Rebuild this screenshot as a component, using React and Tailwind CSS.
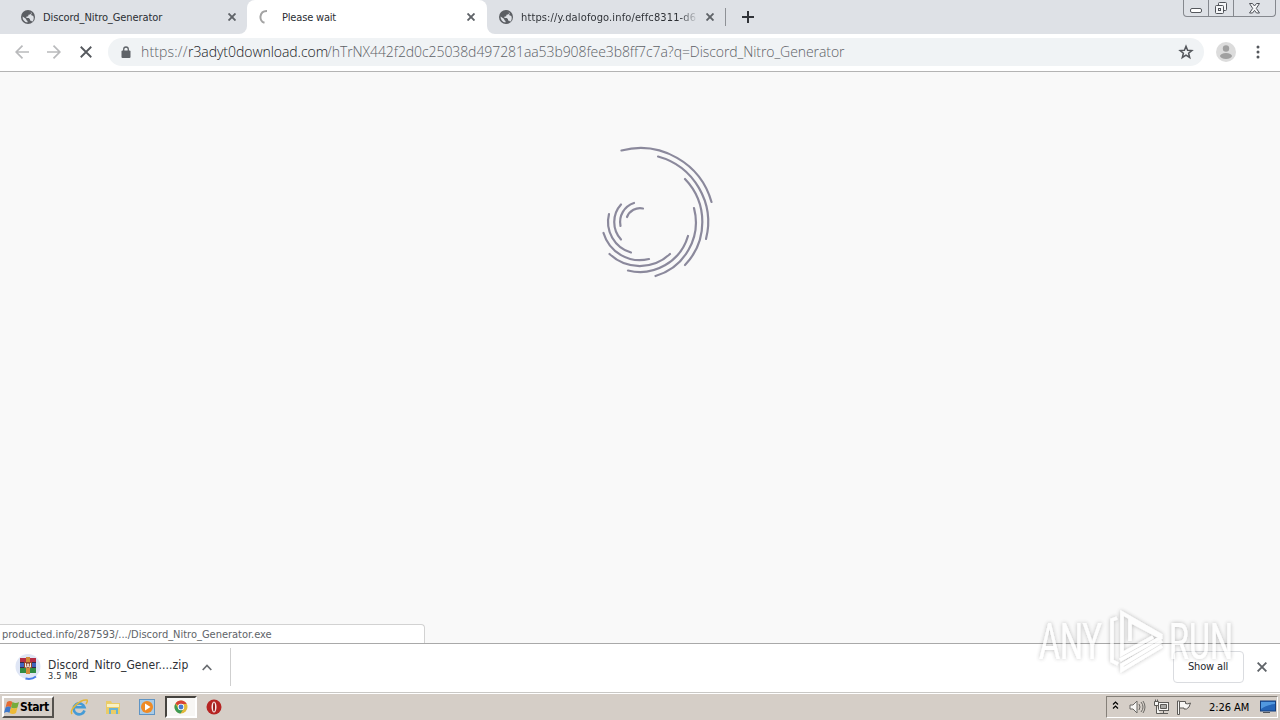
import { useId } from 'react';

const URL_PATH = '/hTrNX442f2d0c25038d497281aa53b908fee3b8ff7c7a?q=Discord_Nitro_Generator';

// Arcs of the loading spiral, from the outside in
const SPIRAL = [
  'M621.500 150.500A74 74 0 0 1 711.500 202',
  'M658 156.500A68 68 0 0 1 706 239',
  'M685 179A62 62 0 0 1 685 265',
  'M694 208A56 56 0 0 1 655.500 276',
  'M688 236A50 50 0 0 1 628 270.500',
  'M670 254A44 44 0 0 1 609.500 254',
  'M649 259A38 38 0 0 1 603.500 233',
  'M631 252.500A32 32 0 0 1 609 214',
  'M621 239.500A26 26 0 0 1 621 204.500',
  'M620.500 226A20 20 0 0 1 634 203',
  'M627 217A14 14 0 0 1 643 208.500',
];

const CloseIcon = ({ size = 8, width = 1.9, color = '#5f6368' }) => (
  <svg width={size} height={size} viewBox="0 0 8 8" className="shrink-0" fill="none" stroke={color} strokeWidth={width}>
    <path d="M.5 .5l7 7M7.500 .5l-7 7" />
  </svg>
);

const GlobeIcon = () => (
  <svg width="14" height="14" viewBox="0 0 14 14" className="shrink-0">
    <circle cx="7" cy="7" r="7" fill="#5b5e63" />
    <path d="M8 1.500l3 1.200-2 1.800-1.500.3-.3 1.500-2 .4.3 1.300h2.300l1.200 1.300v1.200l1.200.3 1 1A5.500 5.500 0 0 0 12.300 6L10 5l1-2zM1.600 6.500l3.600 2.400v1l1.300 1v1.700A5.600 5.600 0 0 1 1.600 6.500z" fill="#dee1e6" />
  </svg>
);

const WindowButtons = () => (
  <div className="flex h-[17px] w-[93px] rounded-b-[4px] border border-t-0 border-[#85888e]">
    <div className="flex w-[25px] items-center justify-center border-r border-[#85888e] pt-[5px]">
      <div className="h-[5px] w-3 rounded-[2px] border border-[#55585d] bg-white" />
    </div>
    <div className="flex w-[25px] items-center justify-center border-r border-[#85888e]">
      <svg width="14" height="14" viewBox="0 0 14 14" fill="#f5f6f8" stroke="#505359">
        <rect x="4.500" y="1.500" width="8" height="8" rx="1" />
        <rect x="1.500" y="4.500" width="8" height="8" rx="1" />
        <rect x="4.500" y="7.500" width="2" height="2" />
      </svg>
    </div>
    <div className="flex flex-1 items-center justify-center">
      <svg width="13" height="11" viewBox="0 0 13 11" fill="#f5f6f8" stroke="#505359">
        <path d="M1.500 .5h3l2 2.500 2-2.500h3L8.300 5.400l3.200 4.600h-3l-2-2.600-2 2.600h-3l3.200-4.600z" />
      </svg>
    </div>
  </div>
);

const TabStrip = () => (
  <div className="flex h-[34px] bg-white">
    <div className="flex h-full w-[247px] items-center rounded-br-lg bg-[#dee1e6] pl-[21px]">
      <GlobeIcon />
      <span className="ml-2 w-[185px] pt-[2px] text-[11px] tracking-[-0.090px]">Discord_Nitro_Generator</span>
      <CloseIcon />
    </div>
    <div className="h-full w-[240px] bg-[#dee1e6] [clip-path:inset(0)]">
      <div className="flex h-full items-center rounded-t-lg bg-white pl-3">
        <svg width="14" height="14" viewBox="0 0 14 14" className="shrink-0" fill="none" stroke="#a3a3a3" strokeWidth="2">
          <path d="M8 1C.1.900-.5 11 5.500 12.800" />
        </svg>
        <span className="ml-[9px] w-[185px] pt-[2px] text-[11px] tracking-[-0.180px]">Please wait</span>
        <CloseIcon />
      </div>
    </div>
    <div className="flex h-full flex-1 rounded-bl-lg bg-[#dee1e6]">
      <div className="flex h-full w-[238px] items-center pl-3">
        <GlobeIcon />
        <span className="ml-2 mr-2 w-[177px] overflow-hidden whitespace-nowrap bg-linear-to-r from-[#2b2e33] from-90% to-transparent bg-clip-text pt-[2px] text-[11px] tracking-[0.130px] text-transparent">
          https://y.dalofogo.info/effc8311-d6
        </span>
        <CloseIcon />
      </div>
      <div className="mt-[8px] h-[18px] w-px bg-[#8e9196]" />
      <svg width="12" height="12" viewBox="0 0 12 12" className="ml-4 mt-[11px]" stroke="#303338" strokeWidth="2">
        <path d="M6 0v12M0 6h12" />
      </svg>
      <div className="ml-auto mr-1">
        <WindowButtons />
      </div>
    </div>
  </div>
);

const Toolbar = () => (
  <div className="flex h-[38px] items-center border-b border-[#b4b4b4] bg-white pb-px pl-[15px]">
    <svg width="14" height="14" viewBox="0 0 14 14" fill="none" stroke="#b9babc" strokeWidth="1.700">
      <path d="M14 7H1M7.500 .7L1.200 7l6.300 6.300" />
    </svg>
    <svg width="14" height="14" viewBox="0 0 14 14" className="ml-[18px]" fill="none" stroke="#b9babc" strokeWidth="1.700">
      <path d="M0 7h13M6.500 .7L12.800 7l-6.300 6.300" />
    </svg>
    <div className="ml-[19px]">
      <CloseIcon size={12} width={1.2} color="#55585d" />
    </div>
    <div className="ml-[16px] flex h-7 w-[1096px] items-center rounded-full bg-[#f0f3f5] pl-[13px] pr-[10px]">
      <svg width="10" height="13" viewBox="0 0 10 13" className="shrink-0">
        <rect x=".5" y="4.500" width="9" height="7.500" rx="1" fill="#5f6368" />
        <path d="M2.700 5V3.300a2.300 2.300 0 0 1 4.600 0V5" fill="none" stroke="#5f6368" strokeWidth="1.300" />
      </svg>
      <span className="ml-[10px] whitespace-nowrap pb-[2px] font-['Open_Sans','Noto_Sans',sans-serif] text-[14px] font-light text-[#5d6166]">
        <span className="inline-block w-[47px] tracking-[0.150px]">https://</span>
        <span className="inline-block w-[139px] tracking-[-0.050px] text-[#17191c]">r3adyt0download.com</span>
        <span className="inline-block tracking-[-0.075px]">{URL_PATH}</span>
      </span>
      <svg width="16" height="16" viewBox="0 0 16 16" className="ml-auto shrink-0" fill="none" stroke="#54575c" strokeWidth="1.500">
        <path d="M8 2.200l1.600 4 4.300.3-3.300 2.800 1.100 4.200L8 11.200l-3.700 2.300 1.100-4.200-3.300-2.800 4.300-.3z" />
      </svg>
    </div>
    <svg width="20" height="20" viewBox="0 0 20 20" className="ml-3">
      <circle cx="10" cy="10" r="10" fill="#dcdcdc" />
      <circle cx="10" cy="6.500" r="3.200" fill="#a0a0a0" />
      <ellipse cx="10" cy="14" rx="6" ry="2.900" fill="#a0a0a0" />
    </svg>
    <svg width="4" height="14" viewBox="0 0 4 14" className="ml-[20px]" fill="#54575c">
      <circle cx="2" cy="2" r="1.500" />
      <circle cx="2" cy="7" r="1.500" />
      <circle cx="2" cy="12" r="1.500" />
    </svg>
  </div>
);

const PageContent = () => (
  <div className="flex h-[571px] flex-col bg-[#f9f9f9]">
    <svg width="120" height="140" viewBox="598 142 120 140" className="ml-[598px] mt-[70px]" fill="none" stroke="#8b899c" strokeWidth="2.200" strokeLinecap="round">
      {SPIRAL.map((d) => <path key={d} d={d} />)}
    </svg>
    {/* Link status */}
    <div className="mt-auto flex h-[19px] w-[425px] items-center rounded-tr-[4px] border-r border-t border-[#d2d2d2] bg-white pl-[2px] pt-[2px] text-[11px] text-[#606368]">
      <span className="tracking-[-0.010px]">producted.info/287593/.../Discord_Nitro_Generator.exe</span>
    </div>
  </div>
);

const ArchiveIcon = () => (
  <svg width="26" height="28" viewBox="0 0 26 28">
    <circle cx="13" cy="13.500" r="12.500" fill="#dfe6f5" />
    <path d="M10.500 25.500q6 1.500 10.500-2" fill="none" stroke="#4a7ee8" strokeWidth="2" />
    <path d="M5 5h16v5H5z" fill="#b52c43" />
    <path d="M5 10h16v5H5z" fill="#4163bd" />
    <path d="M5 15h16v5H5z" fill="#318d43" />
    <path d="M5 9.500h16M5 14.500h16" stroke="#35294a" />
    <path d="M11 4h4v17h-4z" fill="#d38b38" />
    <path d="M9 9h8v6H9z" fill="#94452b" />
    <path d="M10.500 10v4h1.800v-3h1.400v3h1.800v-4" fill="none" stroke="#f5eee0" />
  </svg>
);

const DownloadShelf = () => (
  <div className="flex h-[50px] items-center border-b border-t border-b-[#c9c8c5] border-t-[#a9a9a9] bg-white pb-[2px]">
    <div className="flex h-[38px] w-[231px] items-center border-r border-[#cfcfcf] pl-[15px]">
      <ArchiveIcon />
      <div className="ml-[7px] w-[142px] whitespace-nowrap pt-[5px] text-[#2e3135]">
        <div className="text-[12px] leading-[13px] tracking-[0.070px]">Discord_Nitro_Gener....zip</div>
        <div className="text-[9px] leading-[9px] tracking-[0.300px]">3.5 MB</div>
      </div>
      <svg width="10" height="7" viewBox="0 0 10 7" className="ml-3" fill="none" stroke="#6a6d71" strokeWidth="1.700">
        <path d="M.7 6L5 1.500 9.300 6" />
      </svg>
    </div>
    <button className="ml-auto h-8 w-[71px] rounded-[4px] border border-[#dadce0] bg-white pr-px pt-px text-[11px] tracking-[-0.150px] text-[#24272b]">Show all</button>
    <div className="ml-[13px] mr-[13px]">
      <CloseIcon size={10} width={1.5} />
    </div>
  </div>
);

// Translucent logo floating above the page and the download shelf
const Watermark = () => {
  const id = useId();
  return (
    <svg width="210" height="76" viewBox="0 0 210 76" className="pointer-events-none absolute left-[1034px] top-[604px]">
      <filter id={id} x="-10%" y="-10%" width="120%" height="120%">
        <feDropShadow dx="0" dy="0" stdDeviation="2" floodColor="#000" floodOpacity=".36" />
      </filter>
      <g filter={`url(#${id})`} opacity=".75" fill="#fff" fontFamily="'Roboto', sans-serif" fontSize="50">
        <text x="5" y="55" textLength="63" lengthAdjust="spacingAndGlyphs">ANY</text>
        <text x="135" y="55" textLength="64" lengthAdjust="spacingAndGlyphs">RUN</text>
        <g fill="none" stroke="#fff" strokeWidth="3.500">
          <path d="M83 14l-5 2v41l6 3" />
          <path d="M128 32L88 9v41l31-17M128 34L96 17v20" />
          <path d="M128 33L86 56M128 37L88 61v5l40-24" />
        </g>
      </g>
    </svg>
  );
};

const Taskbar = () => (
  <div className="flex h-[27px] items-center border-t border-white bg-[#d5cec7] text-[11px] text-black">
    <button className="ml-[2px] flex h-[22px] w-[52px] items-center border-2 border-b-[#55524e] border-l-white border-r-[#55524e] border-t-white">
      <svg width="16" height="15" viewBox="0 0 16 15" className="shrink-0">
        <path d="M3 2q3-2 5.500 0L7 7.500Q4 5.500 1.500 7.500z" fill="#e56b32" />
        <path d="M8.500 2q3 2 6.500 0l-1.500 5.500q-3 2-6.500 0z" fill="#75ac3c" />
        <path d="M1.500 7.500q3-2 5.500 0L5.500 13Q3 11 0 13z" fill="#3d78cb" />
        <path d="M7 7.500q3 2 6.500 0L12 13q-3 2-6.500 0z" fill="#edba36" />
      </svg>
      <span className="text-[12px] font-bold tracking-[-0.400px]">Start</span>
    </button>
    <svg width="18" height="18" viewBox="0 0 18 18" className="ml-[16px]" fill="none">
      <path d="M14.500 12.500A5.500 5.500 0 1 1 14.500 9.300H5" stroke="#459bd6" strokeWidth="2.600" />
      <path d="M2 16C-1 12 10 1 17 2q1 1-1 4" stroke="#e4b638" strokeWidth="1.500" />
    </svg>
    <svg width="16" height="16" viewBox="0 0 16 16" className="ml-[17px]">
      <path d="M1 2h5l1 2h8v11H1z" fill="#eacc67" />
      <path d="M2 5h12v3H2z" fill="#f9f1c2" />
      <path d="M4 15V9h9v6h-2v-4H6v4z" fill="#69b3d5" />
    </svg>
    <svg width="16" height="16" viewBox="0 0 16 16" className="ml-[18px]">
      <rect x=".5" y=".5" width="15" height="15" fill="#a9cbe6" stroke="#5f94c4" />
      <circle cx="8" cy="8" r="6" fill="#ef8a24" />
      <path d="M6 4.500v7L11.500 8z" fill="#fff" />
    </svg>
    <div className="ml-[10px] flex h-[22px] w-[32px] items-center justify-center border-2 border-b-white border-l-[#45433f] border-r-white border-t-[#45433f] bg-[#f7f6f4]">
      <svg width="14" height="14" viewBox="0 0 14 14">
        <circle cx="7" cy="7" r="6.500" fill="#e2b93b" />
        <path d="M7 7L1.400 3.700A6.500 6.500 0 0 1 12.700 3.900H7z" fill="#d74336" />
        <path d="M1.400 3.700A6.500 6.500 0 0 0 6.500 13.500L9.700 8.600 7 10 4.200 8.500z" fill="#3c9a55" />
        <circle cx="7" cy="7" r="3.200" fill="#fff" />
        <circle cx="7" cy="7" r="2.400" fill="#4679cf" />
      </svg>
    </div>
    <svg width="16" height="16" viewBox="0 0 16 16" className="ml-[9px]">
      <circle cx="8" cy="8" r="7.500" fill="#b62423" />
      <ellipse cx="8" cy="8" rx="2.500" ry="5.500" fill="#f9eaea" />
      <ellipse cx="8" cy="8" rx="1" ry="4.500" fill="#971b1b" />
    </svg>
    <div className="ml-auto mr-[2px] flex h-[22px] w-[172px] items-center border border-b-white border-l-[#858079] border-r-white border-t-[#858079]">
      <svg width="7" height="9" viewBox="0 0 7 9" className="mb-[3px] ml-[5px]" fill="none" stroke="#000" strokeWidth="1.200">
        <path d="M1 3.500L3.500 1 6 3.500M1 7.500L3.500 5 6 7.500" />
      </svg>
      <svg width="17" height="14" viewBox="0 0 17 14" className="ml-[10px]" fill="#f7f6f4" stroke="#6b6965">
        <path d="M1 5h3l4-4v12L4 9H1z" />
        <path d="M10 4q2 3 0 6M12 2q4 5 0 10M14 1q4 6 0 12" fill="none" />
      </svg>
      <svg width="16" height="16" viewBox="0 0 16 16" className="ml-[7px]" fill="#f7f6f4" stroke="#5c5a57">
        <rect x="5.500" y="3.500" width="10" height="8" />
        <path d="M7.500 5.500h6v4h-6z" fill="#aaa9a6" />
        <path d="M10.500 12v2M7 14.500h8M3.500 6v8.500H7" />
        <path d="M1.500 2.500h4v4h-4zM2.500 .5v2M4.500 .5v2" />
      </svg>
      <svg width="16" height="15" viewBox="0 0 16 15" className="ml-[7px]" fill="#f7f6f4" stroke="#5c5a57">
        <path d="M1.500 1v13.500h2V1z" />
        <path d="M3.500 1.500h6v2q2 1 5-.5-1 5-4 6H8V8H3.500z" />
      </svg>
      <span className="ml-[17px] w-[44px] whitespace-nowrap pt-[2px] tracking-[-0.050px]">2:26 AM</span>
      <svg width="16" height="14" viewBox="0 0 16 14" className="ml-[7px]">
        <rect x=".5" y="1" width="15" height="10" fill="#2565b7" stroke="#173f7c" />
        <path d="M1 2h14v2Q6 5 1 9z" fill="#5198df" />
        <path d="M3 12.500h7" stroke="#53565b" />
      </svg>
    </div>
  </div>
);

const App = () => (
  <div className="relative flex h-[720px] w-[1280px] flex-col overflow-hidden bg-white font-['DejaVu_Sans_Condensed','DejaVu_Sans',sans-serif] text-[#2b2e33]">
    <TabStrip />
    <Toolbar />
    <PageContent />
    <DownloadShelf />
    <Taskbar />
    <Watermark />
  </div>
);

export default App;
